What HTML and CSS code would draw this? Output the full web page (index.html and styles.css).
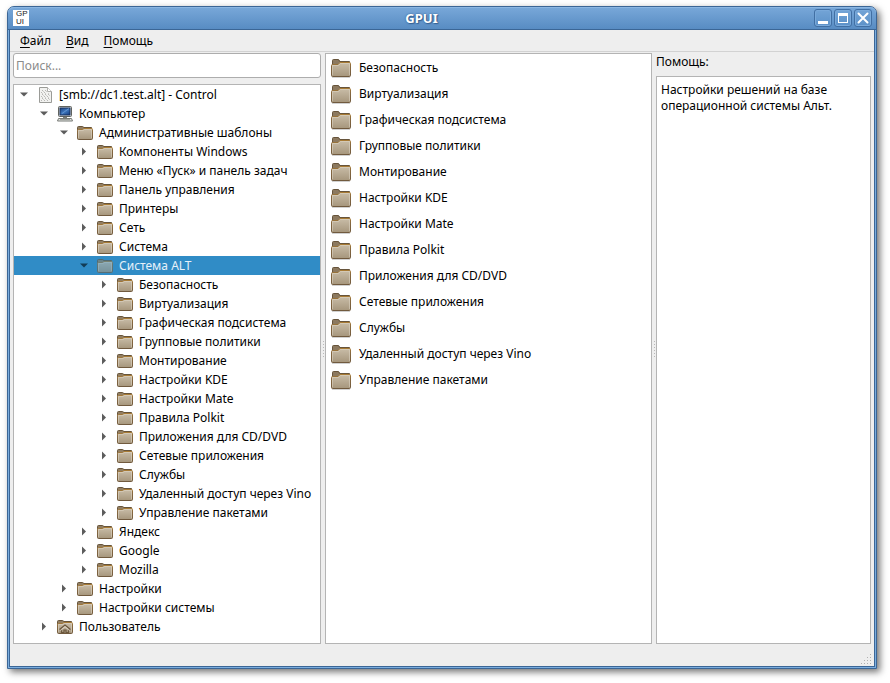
FILE: index.html
```html
<!DOCTYPE html>
<html lang="ru">
<head>
<meta charset="utf-8">
<title>GPUI</title>
<link rel="stylesheet" href="styles.css">
</head>
<body>
<svg class="defs" width="0" height="0" aria-hidden="true">
  <defs>
    <linearGradient id="body-fill" x1="0" y1="0" x2="0" y2="1"><stop offset="0" stop-color="#c9bda8"/><stop offset="1" stop-color="#a6967c"/></linearGradient>
    <linearGradient id="body-line" x1="0" y1="0" x2="0" y2="1"><stop offset="0" stop-color="#a87b35"/><stop offset="0.3" stop-color="#866840"/><stop offset="1" stop-color="#715a3e"/></linearGradient>
    <linearGradient id="screen" x1="0" y1="0" x2="1" y2="1"><stop offset="0" stop-color="#173f82"/><stop offset="0.5" stop-color="#3f78be"/><stop offset="1" stop-color="#12377a"/></linearGradient>
  </defs>
  <symbol id="folder" viewBox="0 0 16 16">
    <path d="M.5 13V2.500q0-1 1-1H5.500q1 0 1 1h8V13z" fill="#927e62" stroke="#67543b"/>
    <path d="M.5 5.500q0-1 1-1h4L7 3.500h7.500q1 0 1 1v9q0 1-1 1h-13q-1 0-1-1z" fill="url(#body-fill)" stroke="url(#body-line)"/>
    <path d="M1.500 13V5.500h4.500l1.500-1h7V13" fill="none" stroke="#dfd5c4" stroke-opacity=".55"/>
  </symbol>
  <symbol id="folder-large" viewBox="0 0 20 19">
    <path d="M1.500 15V1.500q0-1 1-1H7q1.500 0 1.500 2h10V15z" fill="#8c795f" stroke="#67543b"/>
    <path d="M.5 6.500q0-1 1-1H7l2-2h9.500q1 0 1 1v12q0 1-1 1h-17q-1 0-1-1z" fill="url(#body-fill)" stroke="url(#body-line)"/>
    <path d="M1.500 16V6.500h6l2-2h9V16" fill="none" stroke="#dfd5c4" stroke-opacity=".55"/>
    <path d="M1 18.500h18" stroke="#000" stroke-opacity=".18"/>
  </symbol>
  <symbol id="home" viewBox="0 0 16 16">
    <use href="#folder"/>
    <path d="M2.500 10.500 8 6l5.500 4.500M4.500 10v3.500h2.500V11h2v2.500h2.500V10" fill="none" stroke="#6b573d" stroke-width="1.200"/>
    <path d="M3.500 11.500 8 7.700l4.500 3.800" fill="none" stroke="#e8e0d2" stroke-width=".9"/>
  </symbol>
  <symbol id="document" viewBox="0 0 16 16">
    <path d="M2.500.5h8l4 4v11h-12z" fill="#f2f2f0" stroke="#9a9b97"/>
    <path d="M10.500.5v4h4" fill="#fff" stroke="#b0b0ad"/>
    <path d="M5 3.500h4M4 5.500h6M5 7.500h8M4 9.500h9M5 11.500h8M4 13.500h9" stroke="#b8b8b5" stroke-dasharray="1 2"/>
    <path d="M6 4.500h4M5 6.500h8M6 8.500h7M5 10.500h8M6 12.500h7" stroke="#cfcfcc" stroke-dasharray="1 2"/>
  </symbol>
  <symbol id="computer" viewBox="0 0 16 16">
    <rect x="1.500" y=".5" width="13" height="10" rx="1" fill="#dedfdc" stroke="#60635f"/>
    <rect x="3" y="2" width="10" height="7" fill="url(#screen)" stroke="#17315f"/>
    <path d="M5 7.500 12 2.500" stroke="#7ba6dc" stroke-opacity=".6"/>
    <path d="M6 11h4v1.500H6z" fill="#777a76"/>
    <path d="M1.500 12.500h13l1 2.500H.5z" fill="#e4e5e2" stroke="#777a76"/>
    <path d="M3 13.500h10" stroke="#a0a29e"/>
  </symbol>
  <symbol id="open" viewBox="0 0 9 9"><path d="M0 2.500h8L4 6.500z" fill="currentColor"/></symbol>
  <symbol id="closed" viewBox="0 0 9 9"><path d="M2 .5v8L6 4.500z" fill="currentColor"/></symbol>
</svg>
<main class="window">
  <header class="titlebar">
    <span class="logo"><span>GP</span><span>UI</span></span>
    <h1>GPUI</h1>
    <div class="controls">
      <button type="button" aria-label="Свернуть"><svg width="16" height="16"><path d="M3 11h10v3H3z" fill="#fff"/></svg></button>
      <button type="button" aria-label="Развернуть"><svg width="16" height="16"><path d="M3 3h10v10H3zM4 6v6h8V6z" fill="#fff" fill-rule="evenodd"/></svg></button>
      <button type="button" aria-label="Закрыть"><svg width="16" height="16"><path d="m3.500 3.500 9 9m0-9-9 9" stroke="#fff" stroke-width="2" stroke-linecap="round"/></svg></button>
    </div>
  </header>
  <nav class="menubar">
    <button type="button"><u>Ф</u>айл</button>
    <button type="button"><u>В</u>ид</button>
    <button type="button"><u>П</u>омощь</button>
  </nav>
  <div class="panes">
    <section class="pane-tree">
      <input class="search" type="search" placeholder="Поиск..." aria-label="Поиск">
      <ul class="tree box">
        <li><button type="button" class="row l0"><svg class="arrow"><use href="#open"/></svg><svg class="icon"><use href="#document"/></svg>[smb://dc1.test.alt] - Control</button></li>
        <li><button type="button" class="row l1"><svg class="arrow"><use href="#open"/></svg><svg class="icon"><use href="#computer"/></svg>Компьютер</button></li>
        <li><button type="button" class="row l2"><svg class="arrow"><use href="#open"/></svg><svg class="icon"><use href="#folder"/></svg>Административные шаблоны</button></li>
        <li><button type="button" class="row l3"><svg class="arrow"><use href="#closed"/></svg><svg class="icon"><use href="#folder"/></svg>Компоненты Windows</button></li>
        <li><button type="button" class="row l3"><svg class="arrow"><use href="#closed"/></svg><svg class="icon"><use href="#folder"/></svg>Меню «Пуск» и панель задач</button></li>
        <li><button type="button" class="row l3"><svg class="arrow"><use href="#closed"/></svg><svg class="icon"><use href="#folder"/></svg>Панель управления</button></li>
        <li><button type="button" class="row l3"><svg class="arrow"><use href="#closed"/></svg><svg class="icon"><use href="#folder"/></svg>Принтеры</button></li>
        <li><button type="button" class="row l3"><svg class="arrow"><use href="#closed"/></svg><svg class="icon"><use href="#folder"/></svg>Сеть</button></li>
        <li><button type="button" class="row l3"><svg class="arrow"><use href="#closed"/></svg><svg class="icon"><use href="#folder"/></svg>Система</button></li>
        <li><button type="button" class="row l3 selected"><svg class="arrow"><use href="#open"/></svg><svg class="icon"><use href="#folder"/></svg>Система ALT</button></li>
        <li><button type="button" class="row l4"><svg class="arrow"><use href="#closed"/></svg><svg class="icon"><use href="#folder"/></svg>Безопасность</button></li>
        <li><button type="button" class="row l4"><svg class="arrow"><use href="#closed"/></svg><svg class="icon"><use href="#folder"/></svg>Виртуализация</button></li>
        <li><button type="button" class="row l4"><svg class="arrow"><use href="#closed"/></svg><svg class="icon"><use href="#folder"/></svg>Графическая подсистема</button></li>
        <li><button type="button" class="row l4"><svg class="arrow"><use href="#closed"/></svg><svg class="icon"><use href="#folder"/></svg>Групповые политики</button></li>
        <li><button type="button" class="row l4"><svg class="arrow"><use href="#closed"/></svg><svg class="icon"><use href="#folder"/></svg>Монтирование</button></li>
        <li><button type="button" class="row l4"><svg class="arrow"><use href="#closed"/></svg><svg class="icon"><use href="#folder"/></svg>Настройки KDE</button></li>
        <li><button type="button" class="row l4"><svg class="arrow"><use href="#closed"/></svg><svg class="icon"><use href="#folder"/></svg>Настройки Mate</button></li>
        <li><button type="button" class="row l4"><svg class="arrow"><use href="#closed"/></svg><svg class="icon"><use href="#folder"/></svg>Правила Polkit</button></li>
        <li><button type="button" class="row l4"><svg class="arrow"><use href="#closed"/></svg><svg class="icon"><use href="#folder"/></svg>Приложения для CD/DVD</button></li>
        <li><button type="button" class="row l4"><svg class="arrow"><use href="#closed"/></svg><svg class="icon"><use href="#folder"/></svg>Сетевые приложения</button></li>
        <li><button type="button" class="row l4"><svg class="arrow"><use href="#closed"/></svg><svg class="icon"><use href="#folder"/></svg>Службы</button></li>
        <li><button type="button" class="row l4"><svg class="arrow"><use href="#closed"/></svg><svg class="icon"><use href="#folder"/></svg>Удаленный доступ через Vino</button></li>
        <li><button type="button" class="row l4"><svg class="arrow"><use href="#closed"/></svg><svg class="icon"><use href="#folder"/></svg>Управление пакетами</button></li>
        <li><button type="button" class="row l3"><svg class="arrow"><use href="#closed"/></svg><svg class="icon"><use href="#folder"/></svg>Яндекс</button></li>
        <li><button type="button" class="row l3"><svg class="arrow"><use href="#closed"/></svg><svg class="icon"><use href="#folder"/></svg>Google</button></li>
        <li><button type="button" class="row l3"><svg class="arrow"><use href="#closed"/></svg><svg class="icon"><use href="#folder"/></svg>Mozilla</button></li>
        <li><button type="button" class="row l2"><svg class="arrow"><use href="#closed"/></svg><svg class="icon"><use href="#folder"/></svg>Настройки</button></li>
        <li><button type="button" class="row l2"><svg class="arrow"><use href="#closed"/></svg><svg class="icon"><use href="#folder"/></svg>Настройки системы</button></li>
        <li><button type="button" class="row l1"><svg class="arrow"><use href="#closed"/></svg><svg class="icon"><use href="#home"/></svg>Пользователь</button></li>
      </ul>
    </section>
    <div class="splitter"></div>
    <ul class="list box">
      <li><button type="button" class="item"><svg><use href="#folder-large"/></svg>Безопасность</button></li>
      <li><button type="button" class="item"><svg><use href="#folder-large"/></svg>Виртуализация</button></li>
      <li><button type="button" class="item"><svg><use href="#folder-large"/></svg>Графическая подсистема</button></li>
      <li><button type="button" class="item"><svg><use href="#folder-large"/></svg>Групповые политики</button></li>
      <li><button type="button" class="item"><svg><use href="#folder-large"/></svg>Монтирование</button></li>
      <li><button type="button" class="item"><svg><use href="#folder-large"/></svg>Настройки KDE</button></li>
      <li><button type="button" class="item"><svg><use href="#folder-large"/></svg>Настройки Mate</button></li>
      <li><button type="button" class="item"><svg><use href="#folder-large"/></svg>Правила Polkit</button></li>
      <li><button type="button" class="item"><svg><use href="#folder-large"/></svg>Приложения для CD/DVD</button></li>
      <li><button type="button" class="item"><svg><use href="#folder-large"/></svg>Сетевые приложения</button></li>
      <li><button type="button" class="item"><svg><use href="#folder-large"/></svg>Службы</button></li>
      <li><button type="button" class="item"><svg><use href="#folder-large"/></svg>Удаленный доступ через Vino</button></li>
      <li><button type="button" class="item"><svg><use href="#folder-large"/></svg>Управление пакетами</button></li>
    </ul>
    <div class="splitter"></div>
    <section class="pane-help">
      <h2>Помощь:</h2>
      <div class="help box">Настройки решений на базе операционной системы Альт.</div>
    </section>
  </div>
  <footer class="statusbar">
    <svg width="11" height="11" aria-hidden="true"><path d="M9 .5h1M6 3.500h1M9 3.500h1M3 6.500h1M6 6.500h1M9 6.500h1M0 9.500h1M3 9.500h1M6 9.500h1M9 9.500h1" stroke="#b0b0b0"/></svg>
  </footer>
</main>
</body>
</html>
```
FILE: styles.css
```css
* { box-sizing: border-box; }

body {
  margin: 0;
  background: #fff;
  color: #000;
  font: 12px/16px "Noto Sans", sans-serif;
}

button {
  font: inherit;
  color: inherit;
  border: 0;
  margin: 0;
  padding: 0;
  background: none;
  text-align: left;
}

ul { list-style: none; margin: 0; padding: 0; }
svg { display: block; flex: none; }
.defs { position: absolute; }

.window {
  display: flex;
  flex-direction: column;
  min-height: calc(100vh - 20px);
  margin: 6px 13px 14px 7px;
  border: 1px solid #3b6696;
  border-radius: 7px 7px 0 0;
  background: #eee;
  box-shadow: inset 0 0 0 1px #7badde, inset 0 0 0 2px #3b6696, 3px 3px 7px rgba(0, 0, 0, .55);
}

.titlebar {
  display: flex;
  align-items: center;
  height: 23px;
  padding: 0 4px 0 5px;
  border-bottom: 1px solid #3b6696;
  border-radius: 6px 6px 0 0;
  background: linear-gradient(#79a8d9, #588cc3);
  box-shadow: inset 0 1px #8bb6e2;
}

.logo {
  display: flex;
  flex-direction: column;
  width: 16px;
  height: 16px;
  padding-left: 3px;
  background: #fff;
  color: #222;
  font-family: "Liberation Sans", sans-serif;
  font-size: 8px;
  line-height: 8px;
}

.titlebar h1 {
  flex: 1;
  margin: 0;
  color: #fff;
  font-size: 13px;
  line-height: 16px;
  text-align: center;
  text-shadow: 0 0 2px #27558a, 1px 1px 1px #3b6696;
}

.controls { display: flex; gap: 2px; }
.controls button {
  width: 18px;
  height: 18px;
  border: 1px solid #416fa3;
  border-radius: 3px;
  background: linear-gradient(#73a4d6, #5c91c8);
  box-shadow: inset 0 0 0 1px #79a9da;
}

.menubar {
  display: flex;
  gap: 15px;
  height: 22px;
  margin: 0 2px;
  padding: 0 10px;
  border-bottom: 1px solid #d2d2d2;
}
.menubar u { text-underline-offset: 2px; }

.panes {
  flex: 1;
  display: grid;
  grid-template-columns: 308fr 4px 327fr 4px 215fr;
  padding: 1px 5px 0;
}

.box { border: 1px solid #b4b4b4; background: #fff; }

.pane-tree, .pane-help { display: flex; flex-direction: column; min-width: 0; }

.search {
  width: 100%;
  height: 25px;
  margin: 0 0 6px;
  padding: 0 2px;
  border: 1px solid #adadad;
  border-radius: 3px;
  background: #fff;
  font: inherit;
  appearance: none;
}
.search::placeholder { color: #8b8b8b; }

.tree { flex: 1; }

.row {
  display: flex;
  align-items: center;
  width: 100%;
  height: 19px;
  white-space: nowrap;
}
.l0 { padding-left: 6px; }
.l1 { padding-left: 26px; }
.l2 { padding-left: 46px; }
.l3 { padding-left: 66px; }
.l4 { padding-left: 86px; }

.arrow { width: 9px; height: 9px; margin-right: 8px; color: #5c5c5c; }
.icon { width: 16px; height: 16px; margin-right: 6px; }

.selected { background: #308cc6; color: #e6f1f9; }
.selected .arrow { color: #123c56; }
.selected .icon { opacity: .6; }

.splitter {
  align-self: center;
  justify-self: center;
  width: 3px;
  height: 18px;
  background: radial-gradient(circle, #b8b8b8 1px, transparent 1px) 0 0 / 3px 3px;
}

.list { padding-top: 1px; }

.item {
  display: flex;
  align-items: center;
  gap: 8px;
  width: 100%;
  height: 26px;
  padding-left: 5px;
}
.item svg { width: 20px; height: 19px; }

.pane-help h2 {
  margin: 0;
  padding: 1px 0 6px;
  font-size: 12px;
  font-weight: 400;
  line-height: 16px;
}
.help { flex: 1; padding: 5px 4px; }

.statusbar {
  display: flex;
  align-items: flex-end;
  justify-content: flex-end;
  height: 24px;
  padding: 0 4px 3px;
}
```
